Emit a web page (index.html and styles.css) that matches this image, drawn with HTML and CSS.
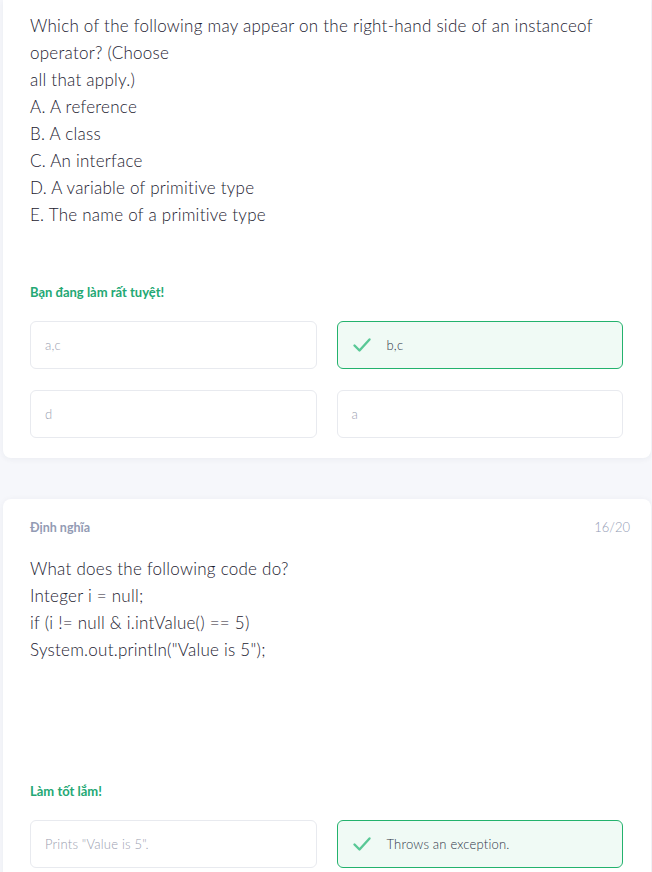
FILE: index.html
```html
<!DOCTYPE html>
<html lang="vi">
<head>
<meta charset="utf-8">
<title>Quiz</title>
<link rel="stylesheet" href="styles.css">
</head>
<body>
<main class="list">
  <section class="card card--cut">
    <div class="question">
      <p>Which of the following may appear on the right-hand side of an instanceof operator? (Choose</p>
      <p>all that apply.)</p>
      <p>A. A reference</p>
      <p>B. A class</p>
      <p>C. An interface</p>
      <p>D. A variable of primitive type</p>
      <p>E. The name of a primitive type</p>
    </div>
    <div class="feedback">Bạn đang làm rất tuyệt!</div>
    <div class="options">
      <div class="option">a,c</div>
      <div class="option option--correct">
        <svg class="check" viewBox="0 0 20 20" width="20" height="20"><path d="M2.5 10.5 L7.5 15.5 L17.5 4.5" fill="none" stroke="#59c896" stroke-width="2.4" stroke-linecap="round" stroke-linejoin="round"/></svg>
        <span>b,c</span>
      </div>
      <div class="option">d</div>
      <div class="option">a</div>
    </div>
  </section>

  <section class="card">
    <div class="card-head">
      <span class="term">Định nghĩa</span>
      <span class="count">16/20</span>
    </div>
    <div class="question">
      <p>What does the following code do?</p>
      <p>Integer i = null;</p>
      <p>if (i != null &amp; i.intValue() == 5)</p>
      <p>System.out.println("Value is 5");</p>
    </div>
    <div class="feedback">Làm tốt lắm!</div>
    <div class="options">
      <div class="option">Prints "Value is 5".</div>
      <div class="option option--correct">
        <svg class="check" viewBox="0 0 20 20" width="20" height="20"><path d="M2.5 10.5 L7.5 15.5 L17.5 4.5" fill="none" stroke="#59c896" stroke-width="2.4" stroke-linecap="round" stroke-linejoin="round"/></svg>
        <span>Throws an exception.</span>
      </div>
    </div>
  </section>
</main>
</body>
</html>
```
FILE: styles.css
```css
html, body {
  margin: 0;
  padding: 0;
  background: #f6f7fb;
  font-family: Lato, "Open Sans", sans-serif;
  color: #282e3e;
}

.list {
  display: flex;
  flex-direction: column;
  gap: 41px;
  padding: 0 1px 0 3px;
}

.card {
  background: #fff;
  border-radius: 8px;
  box-shadow: 0 1px 6px rgba(40, 46, 62, 0.06);
  padding: 20px 21px 20px 27px;
}

.card--cut {
  border-top-left-radius: 0;
  border-top-right-radius: 0;
  padding-top: 12px;
}

.card-head {
  display: flex;
  justify-content: space-between;
  align-items: center;
  height: 16px;
  margin-bottom: 20px;
}

.term {
  font-size: 12.5px;
  font-weight: 700;
  color: #939bb4;
}

.count {
  font-size: 13px;
  font-weight: 300;
  color: #939bb4;
}

.question {
  min-height: 172px;
  margin-bottom: 56px;
  padding-right: 6px;
}

.question p {
  margin: 0;
  font-size: 17px;
  font-weight: 300;
  letter-spacing: 0.25px;
  line-height: 27px;
  color: #1c2130;
}

.feedback {
  font-size: 13px;
  line-height: 16px;
  font-weight: 700;
  color: #23a874;
  margin-bottom: 21px;
}

.options {
  display: grid;
  grid-template-columns: 1fr 1fr;
  column-gap: 20px;
  row-gap: 21px;
  padding-right: 7px;
}

.option {
  box-sizing: border-box;
  height: 48px;
  border: 1px solid #e8eaef;
  border-radius: 6px;
  display: flex;
  align-items: center;
  padding: 0 14px;
  font-size: 13px;
  font-weight: 300;
  letter-spacing: 0.2px;
  color: #9aa0b0;
}

.option--correct {
  border-color: #23b26d;
  background: #f0faf5;
  color: #2e3547;
  gap: 15px;
}

.check {
  flex: none;
}
```
